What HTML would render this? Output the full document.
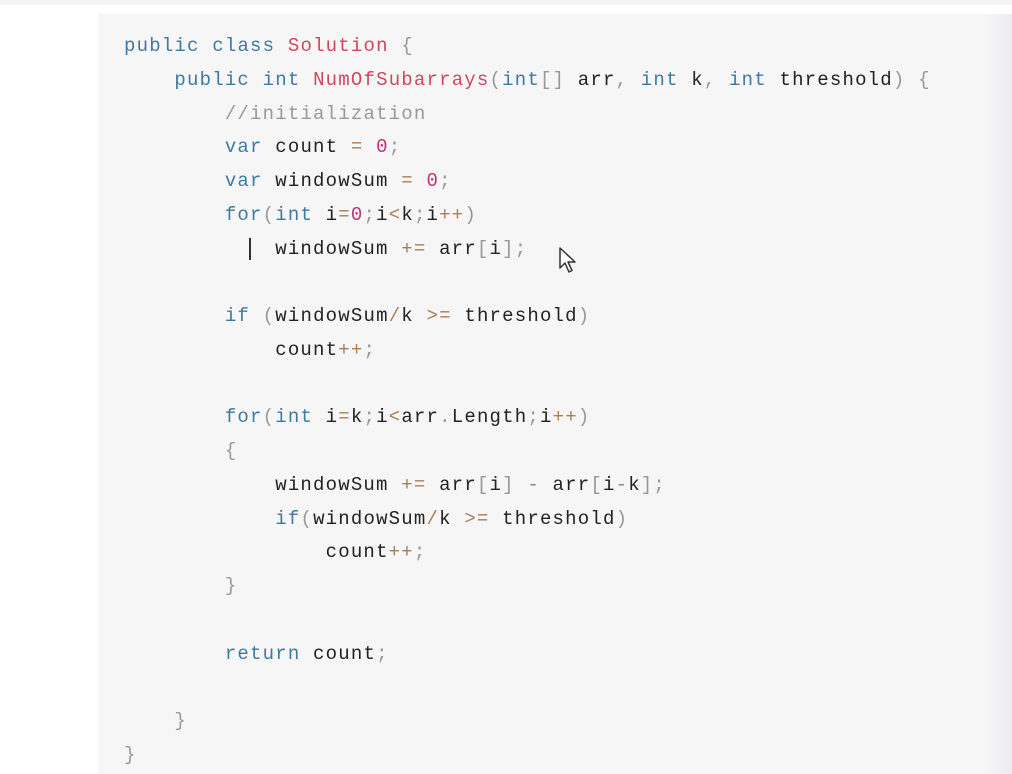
<!DOCTYPE html>
<html><head><meta charset="utf-8"><style>
html,body{margin:0;padding:0;width:1012px;height:760px;overflow:hidden;background:#fff;}
.top{position:absolute;left:0;top:0;width:1012px;height:5px;background:#f4f4f5;}
.blk{position:absolute;left:98px;top:14px;width:914px;height:760px;background:#f6f6f7;}
.shade{position:absolute;left:985px;top:14px;width:27px;height:760px;background:linear-gradient(to right,rgba(240,240,242,0),#ececee);}
pre{position:absolute;left:124px;top:30px;margin:0;font-family:"Liberation Mono","DejaVu Sans Mono",monospace;font-size:19px;line-height:33.75px;color:#222;letter-spacing:1.2px;}
.k{color:#40799f}.f{color:#d2455f}.n{color:#c2307a}.o{color:#a67f59}.p{color:#999}.c{color:#999}
.bar{position:absolute;left:249px;top:238px;width:2px;height:22px;background:#333;}
</style></head><body>
<div class="top"></div>
<div class="blk"></div>
<div class="shade"></div>
<pre><span class="k">public</span> <span class="k">class</span> <span class="f">Solution</span> <span class="p">{</span>
    <span class="k">public</span> <span class="k">int</span> <span class="f">NumOfSubarrays</span><span class="p">(</span><span class="k">int</span><span class="p">[]</span> arr<span class="p">,</span> <span class="k">int</span> k<span class="p">,</span> <span class="k">int</span> threshold<span class="p">)</span> <span class="p">{</span>
        <span class="c">//initialization</span>
        <span class="k">var</span> count <span class="o">=</span> <span class="n">0</span><span class="p">;</span>
        <span class="k">var</span> windowSum <span class="o">=</span> <span class="n">0</span><span class="p">;</span>
        <span class="k">for</span><span class="p">(</span><span class="k">int</span> i<span class="o">=</span><span class="n">0</span><span class="p">;</span>i<span class="o">&lt;</span>k<span class="p">;</span>i<span class="o">++</span><span class="p">)</span>
            windowSum <span class="o">+=</span> arr<span class="p">[</span>i<span class="p">];</span>

        <span class="k">if</span> <span class="p">(</span>windowSum<span class="o">/</span>k <span class="o">&gt;=</span> threshold<span class="p">)</span>
            count<span class="o">++</span><span class="p">;</span>

        <span class="k">for</span><span class="p">(</span><span class="k">int</span> i<span class="o">=</span>k<span class="p">;</span>i<span class="o">&lt;</span>arr<span class="p">.</span>Length<span class="p">;</span>i<span class="o">++</span><span class="p">)</span>
        <span class="p">{</span>
            windowSum <span class="o">+=</span> arr<span class="p">[</span>i<span class="p">]</span> <span class="o">-</span> arr<span class="p">[</span>i<span class="o">-</span>k<span class="p">];</span>
            <span class="k">if</span><span class="p">(</span>windowSum<span class="o">/</span>k <span class="o">&gt;=</span> threshold<span class="p">)</span>
                count<span class="o">++</span><span class="p">;</span>
        <span class="p">}</span>

        <span class="k">return</span> count<span class="p">;</span>

    <span class="p">}</span>
<span class="p">}</span></pre>
<div class="bar"></div>
<svg style="position:absolute;left:558px;top:246px" width="22" height="30" viewBox="0 0 22 30"><path d="M2 2 L2 22 L7 17 L11 26 L14 24.5 L10 16 L17 16 Z" fill="#fff" stroke="#333" stroke-width="1.5" stroke-linejoin="round"/></svg>
</body></html>
